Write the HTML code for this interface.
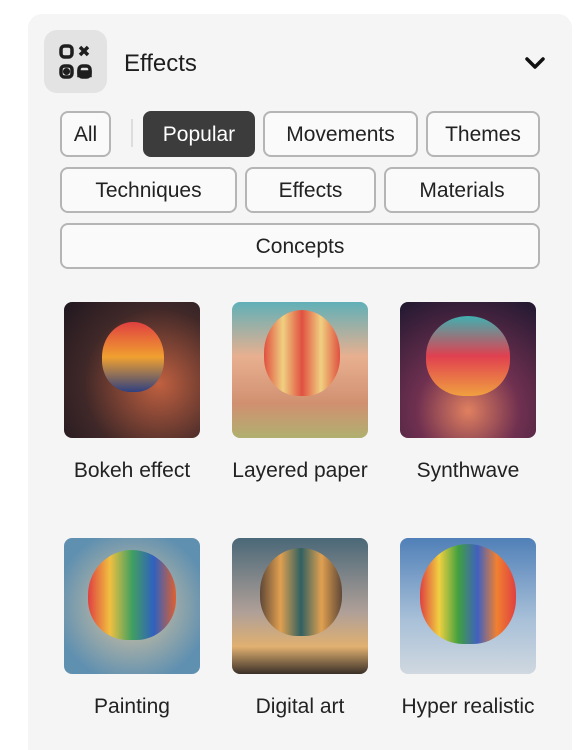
<!DOCTYPE html>
<html style="overflow:hidden;height:750px"><head><style>
body{margin:0;width:584px;height:750px;background:#fff;font-family:"Liberation Sans",sans-serif;position:relative;overflow:hidden;color:#222}
.panel{position:absolute;left:28px;top:14px;width:544px;height:736px;background:#f5f5f5;border-radius:14px 14px 0 0}
.ib{position:absolute;left:44px;top:30px;width:63px;height:63px;background:#e3e3e3;border-radius:13px}
.title{position:absolute;left:124px;top:50px;font-size:24px;color:#1e1e1e}
.btn{position:absolute;box-sizing:border-box;height:46px;border:2px solid #b5b5b5;border-radius:8px;background:#fafafa;font-size:21px;color:#222;display:flex;align-items:center;justify-content:center;padding-top:2px}
.sel{background:#3c3c3c;border-color:#3c3c3c;color:#fff}
.img{position:absolute;width:136px;height:136px;border-radius:8px;overflow:hidden}
.lbl{position:absolute;width:180px;text-align:center;font-size:21px;color:#222}
</style></head><body>
<div class="panel"></div>
<div class="ib"><svg width="63" height="63" viewBox="0 0 63 63" fill="none" stroke="#1e1e1e" stroke-width="3.5"><rect x="17" y="16" width="11" height="11" rx="3.5"/><path d="M36 17l8 8M44 17l-8 8"/><rect x="17" y="36" width="11" height="11" rx="3.5"/><circle cx="22.5" cy="41.5" r="1.8" fill="#1e1e1e"/><rect x="35" y="36" width="11" height="11" rx="3.5"/><path d="M35 42h11v3.5h-11z" fill="#1e1e1e"/></svg></div>
<div class="title">Effects</div>
<svg style="position:absolute;left:524px;top:55px" width="22" height="16" viewBox="0 0 22 16"><path d="M3 4l8 8 8-8" stroke="#111" stroke-width="3.5" fill="none" stroke-linecap="round" stroke-linejoin="round"/></svg>
<div class="btn" style="left:60px;top:111px;width:51px">All</div>
<div style="position:absolute;left:131px;top:119px;width:2px;height:28px;background:#ddd"></div>
<div class="btn sel" style="left:143px;top:111px;width:112px">Popular</div>
<div class="btn" style="left:263px;top:111px;width:155px">Movements</div>
<div class="btn" style="left:426px;top:111px;width:114px">Themes</div>
<div class="btn" style="left:60px;top:167px;width:177px">Techniques</div>
<div class="btn" style="left:245px;top:167px;width:131px">Effects</div>
<div class="btn" style="left:384px;top:167px;width:156px">Materials</div>
<div class="btn" style="left:60px;top:223px;width:480px">Concepts</div>

<div class="img" style="left:64px;top:302px;background:radial-gradient(circle at 70% 60%,#c06040,#402828 60%,#201820)"><div style="position:absolute;left:38px;top:20px;width:62px;height:70px;border-radius:50% 50% 45% 45%;background:linear-gradient(#e04040,#f0a030 50%,#304080)"></div></div>
<div class="img" style="left:232px;top:302px;background:linear-gradient(#60b0b8 0%,#e8b090 40%,#d09070 75%,#b0b070 100%)"><div style="position:absolute;left:32px;top:8px;width:76px;height:86px;border-radius:50% 50% 45% 45%;background:linear-gradient(90deg,#e05040,#f0d080,#e05040,#f0d080,#e05040)"></div></div>
<div class="img" style="left:400px;top:302px;background:radial-gradient(circle at 50% 80%,#e08060,#703050 40%,#201830)"><div style="position:absolute;left:26px;top:14px;width:84px;height:80px;border-radius:50% 50% 45% 45%;background:linear-gradient(#40b0b0,#e04050 50%,#f0a040)"></div></div>
<div class="img" style="left:64px;top:538px;background:radial-gradient(circle,#e0c8a0,#6090b0 80%)"><div style="position:absolute;left:24px;top:12px;width:88px;height:90px;border-radius:50% 50% 45% 45%;background:linear-gradient(90deg,#e04040,#f0c040,#40a060,#3060c0,#e06030)"></div></div>
<div class="img" style="left:232px;top:538px;background:linear-gradient(#4a6878,#b0a098 55%,#e0b070 80%,#3a3028)"><div style="position:absolute;left:28px;top:10px;width:82px;height:88px;border-radius:50% 50% 45% 45%;background:linear-gradient(90deg,#604838,#e0a050,#306060,#e0a050,#604838)"></div></div>
<div class="img" style="left:400px;top:538px;background:linear-gradient(#5080b8,#a8c0d8 60%,#d0d8e0)"><div style="position:absolute;left:20px;top:6px;width:96px;height:100px;border-radius:50% 50% 45% 45%;background:linear-gradient(90deg,#e04040,#f0d040,#40a040,#4060c0,#f08030,#e04040)"></div></div>

<div class="lbl" style="left:42px;top:459px">Bokeh effect</div>
<div class="lbl" style="left:210px;top:459px">Layered paper</div>
<div class="lbl" style="left:378px;top:459px">Synthwave</div>
<div class="lbl" style="left:42px;top:695px">Painting</div>
<div class="lbl" style="left:210px;top:695px">Digital art</div>
<div class="lbl" style="left:378px;top:695px">Hyper realistic</div>
</body></html>
